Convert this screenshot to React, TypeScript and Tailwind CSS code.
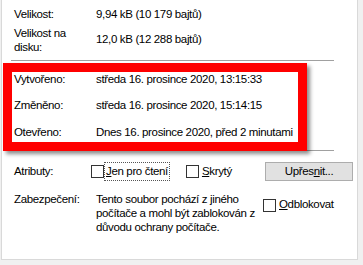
const font = { fontFamily: '"Liberation Sans", Arial, sans-serif' };

const Checkbox = () => (
  <span className="inline-block w-[13px] h-[13px] shrink-0 border border-[#333333] bg-white" />
);

const DateRow = ({ label, value, className }: { label: string; value: string; className?: string }) => (
  <div className={`flex h-[15px] items-center ${className ?? ''}`}>
    <span className="w-[82px] shrink-0">{label}</span>
    <span className="whitespace-nowrap">{value}</span>
  </div>
);

export default function App() {
  return (
    <div
      className="relative w-[363px] h-[265px] overflow-hidden bg-[#f0f0f0] text-[11.5px] tracking-[-0.35px] text-black"
      style={font}
    >
      <div className="ml-px w-[357px] h-[260px] bg-white border-x border-b border-[#d9d9d9] pl-[12px]">
        {/* sizes */}
        <div className="pt-[7px]">
          <DateRow label="Velikost:" value="9,94 kB (10 179 bajtů)" />
          <div className="mt-[4px] flex h-[28px] items-center">
            <span className="w-[82px] shrink-0 leading-[14px]">
              Velikost na
              <br />
              disku:
            </span>
            <span>12,0 kB (12 288 bajtů)</span>
          </div>
        </div>
        <div className="mt-[6px] -ml-[3px] h-px w-[323px] bg-[#a0a0a0]" />

        {/* dates */}
        <DateRow className="mt-[11px]" label="Vytvořeno:" value="středa 16. prosince 2020, 13:15:33" />
        <DateRow className="mt-[11px]" label="Změněno:" value="středa 16. prosince 2020, 15:14:15" />
        <DateRow className="mt-[12px]" label="Otevřeno:" value="Dnes 16. prosince 2020, před 2 minutami" />
        <div className="mt-[10px] -ml-[3px] h-px w-[323px] bg-[#a0a0a0]" />

        {/* attributes */}
        <div className="mt-[11px] flex h-[19px] items-center">
          <span className="w-[77px] shrink-0">Atributy:</span>
          <Checkbox />
          <span className="ml-px px-[1px] outline outline-1 outline-dotted outline-[#555]">
            <u>J</u>en pro čtení
          </span>
          <span className="ml-[17px] flex">
            <Checkbox />
          </span>
          <span className="ml-[3px]">
            <u>S</u>krytý
          </span>
          <button className="ml-auto mr-[4px] h-[19px] w-[88px] border border-[#adadad] bg-[#e1e1e1] text-center">
            Upřes<u>n</u>it...
          </button>
        </div>

        {/* security */}
        <div className="mt-[11px] flex">
          <span className="w-[82px] shrink-0 leading-[14px]">Zabezpečení:</span>
          <span className="w-[164px] shrink-0 leading-[14px]">
            Tento soubor pochází z jiného počítače a mohl být zablokován z důvodu ochrany počítače.
          </span>
          <span className="ml-[3px] mt-[7px] flex items-start gap-[3px] leading-[14px]">
            <Checkbox />
            <span className="-mt-[2px]">
              <u>O</u>dblokovat
            </span>
          </span>
        </div>
      </div>

      {/* red annotation frame */}
      <div className="absolute left-[3px] top-[63px] w-[304px] h-[88px] border-[9px] border-[#ff0000] shadow-[3px_3px_4px_rgba(0,0,0,0.45)]" />
    </div>
  );
}
